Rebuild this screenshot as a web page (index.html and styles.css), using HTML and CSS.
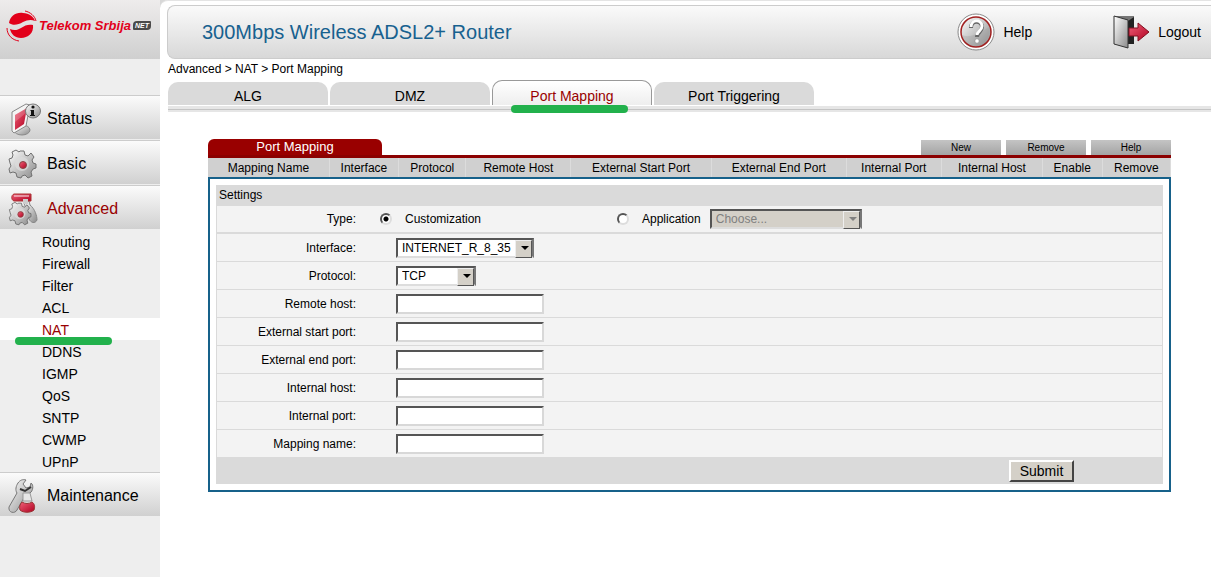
FILE: index.html
```html
<!DOCTYPE html>
<html lang="en">
<head>
    <meta charset="UTF-8">
    <meta name="viewport" content="width=device-width, initial-scale=1.0">
    <title>300Mbps Wireless ADSL2+ Router</title>
    <link rel="stylesheet" href="styles.css">
</head>
<body>
    <!-- Left menu -->
    <div id="sidebar">
        <div class="logo">
            <svg width="32" height="32" viewBox="0 0 32 32">
                <path d="M3 13C4 6 10 2 17 3c6 0 11 4 12 8-4-2-8-1-12 1-5 3-10 4-14 1z" fill="#e2001a"/>
                <path d="M27 15c1 8-5 13-12 13C9 28 5 24 4 19c4 2 8 1 11-1 4-3 8-4 12-3z" fill="#e2001a"/>
                <path d="M19 1c5 1 10 5 11 10M13 31C6 30 1 25 1 18" fill="none" stroke="#e2001a" stroke-width="1"/>
            </svg>
            <span class="logo-name">Telekom Srbija</span>
            <span class="logo-net">NET</span>
        </div>

        <a class="menu" href="#">
            <svg width="36" height="34" viewBox="0 0 36 34">
                <defs>
                    <linearGradient id="metal" x1="0" y1="0" x2="1" y2="1">
                        <stop offset="0" stop-color="#fff"/>
                        <stop offset="1" stop-color="#8a8a8a"/>
                    </linearGradient>
                    <linearGradient id="red" x1="0" y1="0" x2="1" y2="1">
                        <stop offset="0" stop-color="#ef6078"/>
                        <stop offset="1" stop-color="#b00020"/>
                    </linearGradient>
                </defs>
                <ellipse cx="16" cy="28" rx="8" ry="5" fill="url(#metal)" stroke="#888"/>
                <path d="M6 10l14-8 4 1-4 21L8 31l-2-2z" fill="#f4f4f4" stroke="#888"/>
                <path d="M9 13l12-7-3 16-9 6z" fill="url(#red)"/>
                <path d="M9 13l12-7-1 5-11 9z" fill="#fff" opacity=".2"/>
                <ellipse cx="27" cy="9" rx="7.500" ry="7" fill="url(#metal)" stroke="#777"/>
                <circle cx="27" cy="5" r="1.600" fill="#111"/>
                <path d="M25 8h3v5h1v1h-5v-1h1V9h-1z" fill="#111"/>
            </svg>
            Status
        </a>
        <a class="menu" href="#">
            <svg width="36" height="34" viewBox="0 0 36 34">
                <path d="M14 4l4 0 1 4 3 1 3-3 3 4-2 3 1 3 3 1v4l-3 1-2 3 1 4-4 2-3-3-3 1-1 2-4-1-1-4-3-1-3 1-1-4 2-3-1-3-1-4 3-1 1-3-1-3 4-2 3 2z" fill="url(#metal)" stroke="#707070"/>
                <circle cx="16" cy="17" r="7" fill="#ddd" opacity=".7"/>
                <circle cx="17" cy="18" r="3.500" fill="url(#red)" stroke="#844"/>
            </svg>
            Basic
        </a>
        <a class="menu active" href="#">
            <svg width="36" height="34" viewBox="0 0 36 34">
                <path d="M18 10l5-1 1 4c5 4 7 11 7 15-2 4-6 3-8-1l-4-13z" fill="url(#metal)" stroke="#888"/>
                <path d="M8 2h17v7H8c-3-1-3-6 0-7z" fill="url(#red)" stroke="#a33"/>
                <path d="M8 3h15v2H8z" fill="#fff" opacity=".45"/>
                <path d="M17 7h5v5h-5z" fill="#ccc"/>
                <g transform="translate(1 8) scale(.8)">
                    <path d="M14 4l4 0 1 4 3 1 3-3 3 4-2 3 1 3 3 1v4l-3 1-2 3 1 4-4 2-3-3-3 1-1 2-4-1-1-4-3-1-3 1-1-4 2-3-1-3-1-4 3-1 1-3-1-3 4-2 3 2z" fill="url(#metal)" stroke="#666"/>
                    <circle cx="16" cy="17" r="7" fill="#ddd" opacity=".7"/>
                    <circle cx="17" cy="18" r="3.500" fill="url(#red)" stroke="#844"/>
                </g>
            </svg>
            Advanced
        </a>
        <ul class="submenu">
            <li><a href="#">Routing</a></li>
            <li><a href="#">Firewall</a></li>
            <li><a href="#">Filter</a></li>
            <li><a href="#">ACL</a></li>
            <li class="active"><a href="#">NAT</a></li>
            <li><a href="#">DDNS</a></li>
            <li><a href="#">IGMP</a></li>
            <li><a href="#">QoS</a></li>
            <li><a href="#">SNTP</a></li>
            <li><a href="#">CWMP</a></li>
            <li><a href="#">UPnP</a></li>
        </ul>
        <a class="menu" href="#">
            <svg width="36" height="34" viewBox="0 0 36 34">
                <path d="M12 4c2-3 5-4 8-3l-3 4 3 4 4-1 1-4c3 2 2 8-1 10l-5 3-8 14c-2 4-9 3-8-3l8-14c-2-3-1-7 1-10z" fill="url(#metal)" stroke="#777"/>
                <path d="M14 10l5 2 6-4" fill="none" stroke="#333" stroke-width="2"/>
                <path d="M17 14h7l2 8h-9z" fill="#e6e6e6" stroke="#999"/>
                <path d="M16 23c3 2 7 2 10 0 3 2 3 5 2 8-3 3-11 3-14 0-1-3 0-6 2-8z" fill="url(#red)" stroke="#933"/>
            </svg>
            Maintenance
        </a>
    </div>

    <!-- Page content -->
    <div class="content">
        <div id="main">
            <div class="header">
                <h1>300Mbps Wireless ADSL2+ Router</h1>
                <a class="header-link" href="#">
                    <svg width="38" height="38" viewBox="0 0 38 38">
                        <circle cx="19" cy="19" r="18" fill="#fff" stroke="#888"/>
                        <circle cx="19" cy="19" r="15" fill="url(#metal)" stroke="#a02020" stroke-width="1.500"/>
                        <path d="M5 22c6 3 16 0 27-8 2 8-4 19-13 19-7 0-12-4-14-11z" fill="#999" opacity=".3"/>
                        <path d="M14 15c0-8 11-8 11-1 0 5-5 5-5 10" fill="none" stroke="#666" stroke-width="4"/>
                        <path d="M14 14c0-8 11-8 11-1 0 5-5 5-5 9" fill="none" stroke="#fff" stroke-width="3"/>
                        <circle cx="20" cy="28" r="2.200" fill="#fff" stroke="#888" stroke-width=".6"/>
                    </svg>
                    Help
                </a>
                <a class="header-link logout" href="#">
                    <svg width="38" height="34" viewBox="0 0 38 34">
                        <path d="M2 1h20v28H2z" fill="#777"/>
                        <path d="M16 6l6-4v27h-6z" fill="#222"/>
                        <path d="M2 1l14 4v28L2 29z" fill="url(#metal)" stroke="#333"/>
                        <path d="M17 13h9V8l11 9-11 9v-5h-9z" fill="url(#red)" stroke="#801020"/>
                    </svg>
                    Logout
                </a>
            </div>
            <div class="breadcrumb">Advanced &gt; NAT &gt; Port Mapping</div>
            <div class="tabs">
                <a href="#">ALG</a>
                <a href="#">DMZ</a>
                <a class="active" href="#">Port Mapping</a>
                <a href="#">Port Triggering</a>
            </div>

            <div class="panel">
                <div class="panel-top">
                    <h2>Port Mapping</h2>
                    <div class="actions">
                        <button type="button">New</button>
                        <button type="button">Remove</button>
                        <button type="button">Help</button>
                    </div>
                </div>
                <table class="mappings">
                    <tr>
                        <th class="name">Mapping Name</th>
                        <th class="iface">Interface</th>
                        <th class="proto">Protocol</th>
                        <th class="remote">Remote Host</th>
                        <th class="start">External Start Port</th>
                        <th class="end">External End Port</th>
                        <th class="inport">Internal Port</th>
                        <th class="inhost">Internal Host</th>
                        <th class="enable">Enable</th>
                        <th class="del">Remove</th>
                    </tr>
                </table>

                <form class="settings">
                    <h3>Settings</h3>
                    <div class="row type">
                        <span class="label">Type:</span>
                        <div class="choice custom">
                            <input type="radio" name="type" id="custom" checked>
                            <label for="custom">Customization</label>
                        </div>
                        <div class="choice">
                            <input type="radio" name="type" id="app">
                            <label for="app">Application</label>
                            <span class="select disabled">
                                <select class="wide" aria-label="Application" disabled><option>Choose...</option></select>
                            </span>
                        </div>
                    </div>
                    <div class="row">
                        <label class="label" for="iface">Interface:</label>
                        <span class="select">
                            <select id="iface" class="medium"><option>INTERNET_R_8_35</option></select>
                        </span>
                    </div>
                    <div class="row">
                        <label class="label" for="proto">Protocol:</label>
                        <span class="select">
                            <select id="proto" class="small"><option>TCP</option><option>UDP</option></select>
                        </span>
                    </div>
                    <div class="row">
                        <label class="label" for="remote">Remote host:</label>
                        <input type="text" id="remote">
                    </div>
                    <div class="row">
                        <label class="label" for="extstart">External start port:</label>
                        <input type="text" id="extstart">
                    </div>
                    <div class="row">
                        <label class="label" for="extend">External end port:</label>
                        <input type="text" id="extend">
                    </div>
                    <div class="row">
                        <label class="label" for="inhost">Internal host:</label>
                        <input type="text" id="inhost">
                    </div>
                    <div class="row">
                        <label class="label" for="inport">Internal port:</label>
                        <input type="text" id="inport">
                    </div>
                    <div class="row">
                        <label class="label" for="mapname">Mapping name:</label>
                        <input type="text" id="mapname">
                    </div>
                    <div class="submit-row">
                        <button type="submit">Submit</button>
                    </div>
                </form>
            </div>
        </div>
    </div>
</body>
</html>
```

FILE: styles.css
```css
/* Basic Styling */
* {
    box-sizing: border-box;
}

body {
    display: flex;
    min-height: 100vh;
    margin: 0;
    font-family: "Liberation Sans", Arial, sans-serif;
    font-size: 12px;
    color: #000;
    background-color: #fff;
}

a {
    color: inherit;
    text-decoration: none;
}

h1, h2, h3 {
    margin: 0;
    font-weight: normal;
}

/* Left menu */
#sidebar {
    flex: 0 0 160px;
    min-width: 0;
    background-color: #eee;
}

.logo {
    display: flex;
    align-items: center;
    height: 59px;
    margin-bottom: 36px;
    padding: 0 0 8px 6px;
    background: linear-gradient(#eeecec, #cfcfcf);
    white-space: nowrap;
}

.logo svg {
    flex: none;
}

.logo-name {
    margin-left: 1px;
    font-size: 13px;
    font-weight: bold;
    font-style: italic;
    color: #e2001a;
}

.logo-net {
    margin-left: 2px;
    padding: 0 2px;
    border-radius: 4px 1px;
    background-color: #4a4a4a;
    font-size: 7px;
    line-height: 9px;
    font-weight: bold;
    font-style: italic;
    color: #fff;
}

.menu {
    display: flex;
    align-items: center;
    gap: 5px;
    height: 44px;
    margin-bottom: 1px;
    padding: 2px 0 0 6px;
    border-top: 1px solid #ccc;
    background: linear-gradient(#fbfbfb, #d0d0d0);
    font-size: 16px;
}

.menu.active {
    color: #990000;
}

.submenu {
    margin: 0;
    padding: 0;
    list-style: none;
    font-size: 14px;
    line-height: 20px;
}

.submenu li {
    padding: 2px 0 0 42px;
}

.submenu .active {
    position: relative;
    background-color: #fff;
    color: #990000;
}

/* Green marker lines */
.submenu .active::after,
.tabs .active::after {
    content: "";
    position: absolute;
    height: 8px;
    border-radius: 4px;
    background-color: #22b14c;
}

.submenu .active::after {
    left: 15px;
    top: 19px;
    width: 97px;
}

.tabs .active::after {
    left: 18px;
    top: 24px;
    width: 117px;
}

/* Header */
.content {
    flex: 1;
    min-width: 0;
    background: linear-gradient(#d8d8d8, #d8d8d8) 0 0 / 12px 12px no-repeat;
}

#main {
    border-top: 1px solid #e4e4e4;
    border-top-left-radius: 8px;
    background-color: #fff;
}

.header {
    display: flex;
    align-items: center;
    height: 54px;
    margin: 4px 0 0 7px;
    padding: 0 10px 0 34px;
    border: 1px solid #ccc;
    border-right: 0;
    border-radius: 8px 0 0 8px;
    background: linear-gradient(#fafafa, #d8d8d8);
}

h1 {
    flex: 1;
    font-size: 20px;
    color: #17618f;
}

.header-link {
    display: flex;
    align-items: center;
    gap: 8px;
    font-size: 14px;
}

.logout {
    margin-left: 80px;
}

.breadcrumb {
    padding-left: 8px;
    line-height: 21px;
}

/* Tabs */
.tabs {
    display: flex;
    align-items: flex-end;
    gap: 2px;
    height: 32px;
    margin-left: 8px;
    padding-bottom: 7px;
    background: linear-gradient(#e6e6e6, #e6e6e6) 0 26px / 100% 6px no-repeat;
    position: relative;
}

/* darker line through the bar under the tabs */
.tabs::before {
    content: "";
    position: absolute;
    left: 0;
    right: 0;
    bottom: 2px;
    height: 1px;
    background-color: #c4c4c4;
}

.tabs a {
    width: 160px;
    height: 23px;
    border-radius: 10px 10px 0 0;
    background-color: #dadada;
    font-size: 14px;
    line-height: 28px;
    text-align: center;
}

.tabs .active {
    position: relative;
    height: 25px;
    border: 1px solid #999;
    border-bottom: 0;
    background: linear-gradient(#fff, #eee);
    line-height: 30px;
    color: #990000;
}

/* Port mapping panel */
.panel {
    margin: 27px 40px 0 48px;
}

.panel-top {
    display: flex;
    justify-content: space-between;
    align-items: flex-end;
    border-bottom: 3px solid #8b0000;
}

.panel-top h2 {
    width: 174px;
    border-radius: 6px 6px 0 0;
    background-color: #990000;
    font-size: 13px;
    line-height: 16px;
    text-align: center;
    color: #fff;
}

.actions {
    display: flex;
    gap: 5px;
}

.actions button {
    width: 80px;
    height: 15px;
    padding: 0;
    border: 0;
    background: linear-gradient(#c4c4c4, #a4a4a4);
    font-family: inherit;
    font-size: 10px;
}

.mappings {
    width: 100%;
    table-layout: fixed;
    border-collapse: collapse;
    background-color: #d0d0d0;
}

.mappings th {
    height: 19px;
    padding: 0;
    border-right: 1px solid #dcdcdc;
    font-weight: normal;
    white-space: nowrap;
}

.mappings .name { width: 12.6%; }
.mappings .iface { width: 7.2%; }
.mappings .proto { width: 7%; }
.mappings .remote { width: 10.9%; }
.mappings .start { width: 14.6%; }
.mappings .end { width: 14%; }
.mappings .inport { width: 9.9%; }
.mappings .inhost { width: 10.5%; }
.mappings .enable { width: 6.2%; }
.mappings .del { width: 7.1%; }

/* Settings form */
.settings {
    padding: 6px;
    border: 2px solid #17618a;
}

h3 {
    padding-left: 3px;
    background-color: #dadada;
    font-size: 12px;
    line-height: 21px;
}

.row {
    display: flex;
    align-items: center;
    gap: 40px;
    height: 28px;
    border: 1px solid #dadada;
    border-top: 0;
    background-color: #f3f3f3;
}

.row.type {
    gap: 24px;
    border-bottom-width: 2px;
}

.label {
    width: 139px;
    text-align: right;
}

.choice {
    display: flex;
    align-items: center;
}

.choice.custom {
    width: 213px;
}

.choice label {
    margin: 0 9px 0 13px;
}

input[type="text"] {
    width: 148px;
    height: 20px;
    padding: 0 2px;
    border: 2px solid;
    border-color: #555 #d8d8d8 #d8d8d8 #555;
    background-color: #fff;
}

input[type="radio"] {
    appearance: none;
    width: 12px;
    height: 12px;
    margin: 0;
    border: 2px solid;
    border-color: #555 #ddd #ddd #555;
    border-radius: 50%;
    background-color: #fff;
}

input[type="radio"]:checked {
    background: radial-gradient(#000 2px, #fff 3px);
}

/* Drop-downs */
.select {
    position: relative;
    display: flex;
}

select {
    appearance: none;
    height: 20px;
    padding: 0 18px 0 4px;
    border: 2px solid;
    border-color: #555 #777 #ddd #555;
    border-radius: 0;
    background-color: #fff;
    font-family: inherit;
    font-size: 12px;
    color: #000;
}

.select::before {
    content: "";
    position: absolute;
    right: 2px;
    top: 2px;
    width: 15px;
    height: 16px;
    border: 1px solid;
    border-color: #eee #555 #555 #eee;
    background-color: #d4d0c8;
    pointer-events: none;
}

.select::after {
    content: "";
    position: absolute;
    right: 5px;
    top: 8px;
    border: 4px solid transparent;
    border-top-color: #000;
    border-bottom: 0;
    pointer-events: none;
}

select.small { width: 80px; }
select.medium { width: 138px; }
select.wide { width: 152px; }

.disabled select {
    background-color: #d4d0c8;
    color: #808080;
    opacity: 1;
}

.disabled::after {
    border-top-color: #808080;
}

.submit-row {
    display: flex;
    justify-content: flex-end;
    padding: 2px 89px 2px 0;
    background-color: #dadada;
}

.submit-row button {
    width: 65px;
    height: 22px;
    padding: 0;
    border: 2px solid;
    border-color: #fff #444 #444 #fff;
    background-color: #d4d0c8;
    font-family: inherit;
    font-size: 14px;
}
```
